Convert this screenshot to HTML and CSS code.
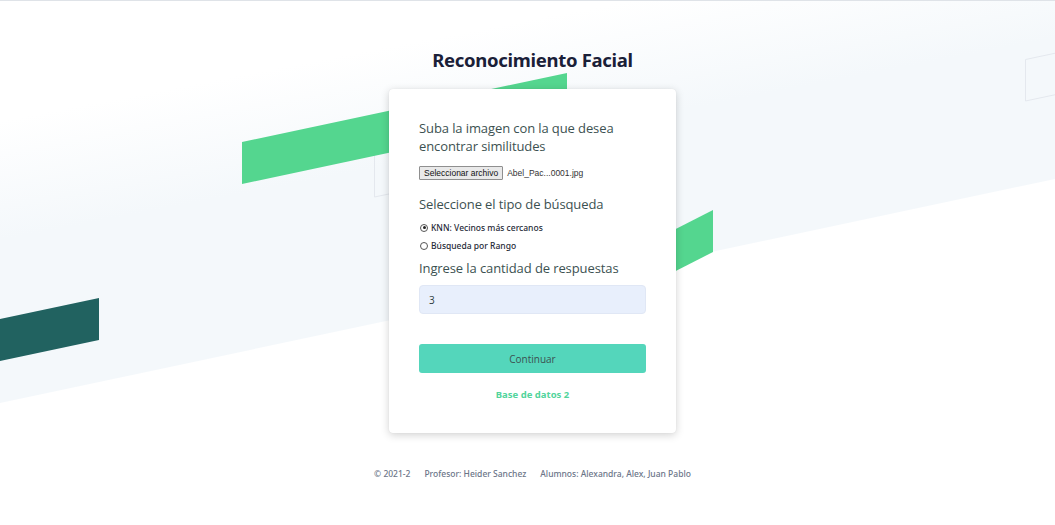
FILE: index.html
```html
<!DOCTYPE html>
<html lang="es">
<head>
<meta charset="utf-8">
<title>Reconocimiento Facial</title>
<link rel="stylesheet" href="styles.css">
</head>
<body>
<svg class="decor" width="1055" height="525" viewBox="0 0 1055 525" aria-hidden="true">
  <defs>
    <linearGradient id="band" gradientUnits="userSpaceOnUse" x1="0" y1="120" x2="22" y2="235">
      <stop offset="0" stop-color="#ffffff"/>
      <stop offset="1" stop-color="#f4f8fb"/>
    </linearGradient>
  </defs>
  <polygon points="0,-200 1055,-424 1055,178 0,402" fill="url(#band)"/>
  <polygon points="1025.5,58.5 1120,38.5 1120,80 1025.5,100" fill="none" stroke="#e4e8ee" stroke-width="1"/>
  <polygon points="374.5,127 470,107 470,176 374.5,196" fill="none" stroke="#e4e8ee" stroke-width="1"/>
  <polygon points="242,141 567,72 567,114 242,183" fill="#54d68f"/>
  <polygon points="560,287 713,209 713,251 560,329" fill="#54d68f"/>
  <polygon points="0,318 99,297 99,339 0,360" fill="#216260"/>
</svg>

<main class="page">
  <h1 class="title">Reconocimiento Facial</h1>

  <form class="card">
    <p class="label">Suba la imagen con la que desea encontrar similitudes</p>
    <div class="file-row">
      <span class="file-btn">Seleccionar archivo</span>
      <span class="file-name">Abel_Pac...0001.jpg</span>
    </div>

    <p class="label label-search">Seleccione el tipo de búsqueda</p>
    <label class="radio"><span class="dot checked"></span>KNN: Vecinos más cercanos</label>
    <label class="radio"><span class="dot"></span>Búsqueda por Rango</label>

    <p class="label label-count">Ingrese la cantidad de respuestas</p>
    <div class="input">3</div>

    <div class="button">Continuar</div>
    <a class="link" href="#">Base de datos 2</a>
  </form>

  <footer class="footer">
    <span>© 2021-2</span>
    <span>Profesor: Heider Sanchez</span>
    <span>Alumnos: Alexandra, Alex, Juan Pablo</span>
  </footer>
</main>
</body>
</html>
```

FILE: styles.css
```css
* { box-sizing: border-box; }

html, body {
  margin: 0;
  padding: 0;
  background: #ffffff;
}

body {
  width: 1055px;
  height: 525px;
  overflow: hidden;
  position: relative;
  border-top: 1px solid #dfe3e8;
  font-family: "Open Sans", "Noto Sans", sans-serif;
}

.decor {
  position: absolute;
  left: 0;
  top: 0;
  z-index: 0;
}

.page {
  position: relative;
  z-index: 1;
  display: flex;
  flex-direction: column;
  align-items: center;
  padding-top: 45px;
  padding-left: 10px;
}

.title {
  margin: 0;
  font-family: "Noto Sans", sans-serif;
  font-size: 18.5px;
  line-height: 28px;
  font-weight: 700;
  color: #1a2038;
  letter-spacing: -0.3px;
}

.card {
  margin-top: 15px;
  width: 287px;
  height: 344px;
  background: #ffffff;
  border-radius: 4px;
  box-shadow: 0 2px 8px rgba(0, 0, 0, 0.18), 0 0 1px rgba(0,0,0,0.1);
  padding: 30px 30px 0 30px;
  display: flex;
  flex-direction: column;
  align-items: stretch;
}

.label {
  margin: 0;
  font-size: 13px;
  line-height: 18px;
  color: #3c5151;
  letter-spacing: -0.1px;
}

.file-row {
  margin-top: 11px;
  display: flex;
  align-items: center;
  gap: 4px;
  font-family: "Liberation Sans", Arial, sans-serif;
  font-size: 8.5px;
  color: #333;
}

.file-btn {
  display: inline-block;
  height: 14px;
  line-height: 12px;
  padding: 0 4px;
  background: #e9e9e9;
  border: 1px solid #8f8f8f;
  border-radius: 1px;
  color: #111;
}

.label-search {
  margin-top: 15px;
}

.radio {
  display: flex;
  align-items: center;
  margin-top: 8px;
  font-family: "Noto Sans", sans-serif;
  font-size: 8.5px;
  line-height: 13px;
  font-weight: 500;
  color: #1f2a37;
}

.radio + .radio {
  margin-top: 5px;
}

.dot {
  width: 8px;
  height: 8px;
  border: 1px solid #555;
  border-radius: 50%;
  margin-right: 3px;
  margin-left: 1px;
  position: relative;
  background: #fff;
}

.dot.checked::after {
  content: "";
  position: absolute;
  left: 1.5px;
  top: 1.5px;
  width: 3px;
  height: 3px;
  border-radius: 50%;
  background: #222;
}

.label-count {
  margin-top: 7px;
}

.input {
  margin-top: 8px;
  height: 29px;
  background: #e8effc;
  border: 1px solid #e0e7f5;
  border-radius: 4px;
  padding: 0 9px;
  display: flex;
  align-items: center;
  font-size: 10px;
  color: #2d3b3b;
}

.button {
  margin-top: 30px;
  height: 29px;
  background: #54d6bb;
  border-radius: 3px;
  display: flex;
  align-items: center;
  justify-content: center;
  font-size: 10px;
  color: #3c5151;
}

.link {
  margin-top: 15px;
  align-self: center;
  font-size: 9.5px;
  font-weight: 700;
  color: #52d49c;
  text-decoration: none;
  font-family: "Noto Sans", sans-serif;
}

.footer {
  margin-top: 35px;
  display: flex;
  gap: 14px;
  font-family: "Noto Sans", sans-serif;
  font-size: 8.5px;
  font-weight: 500;
  color: #6b7588;
}
```
